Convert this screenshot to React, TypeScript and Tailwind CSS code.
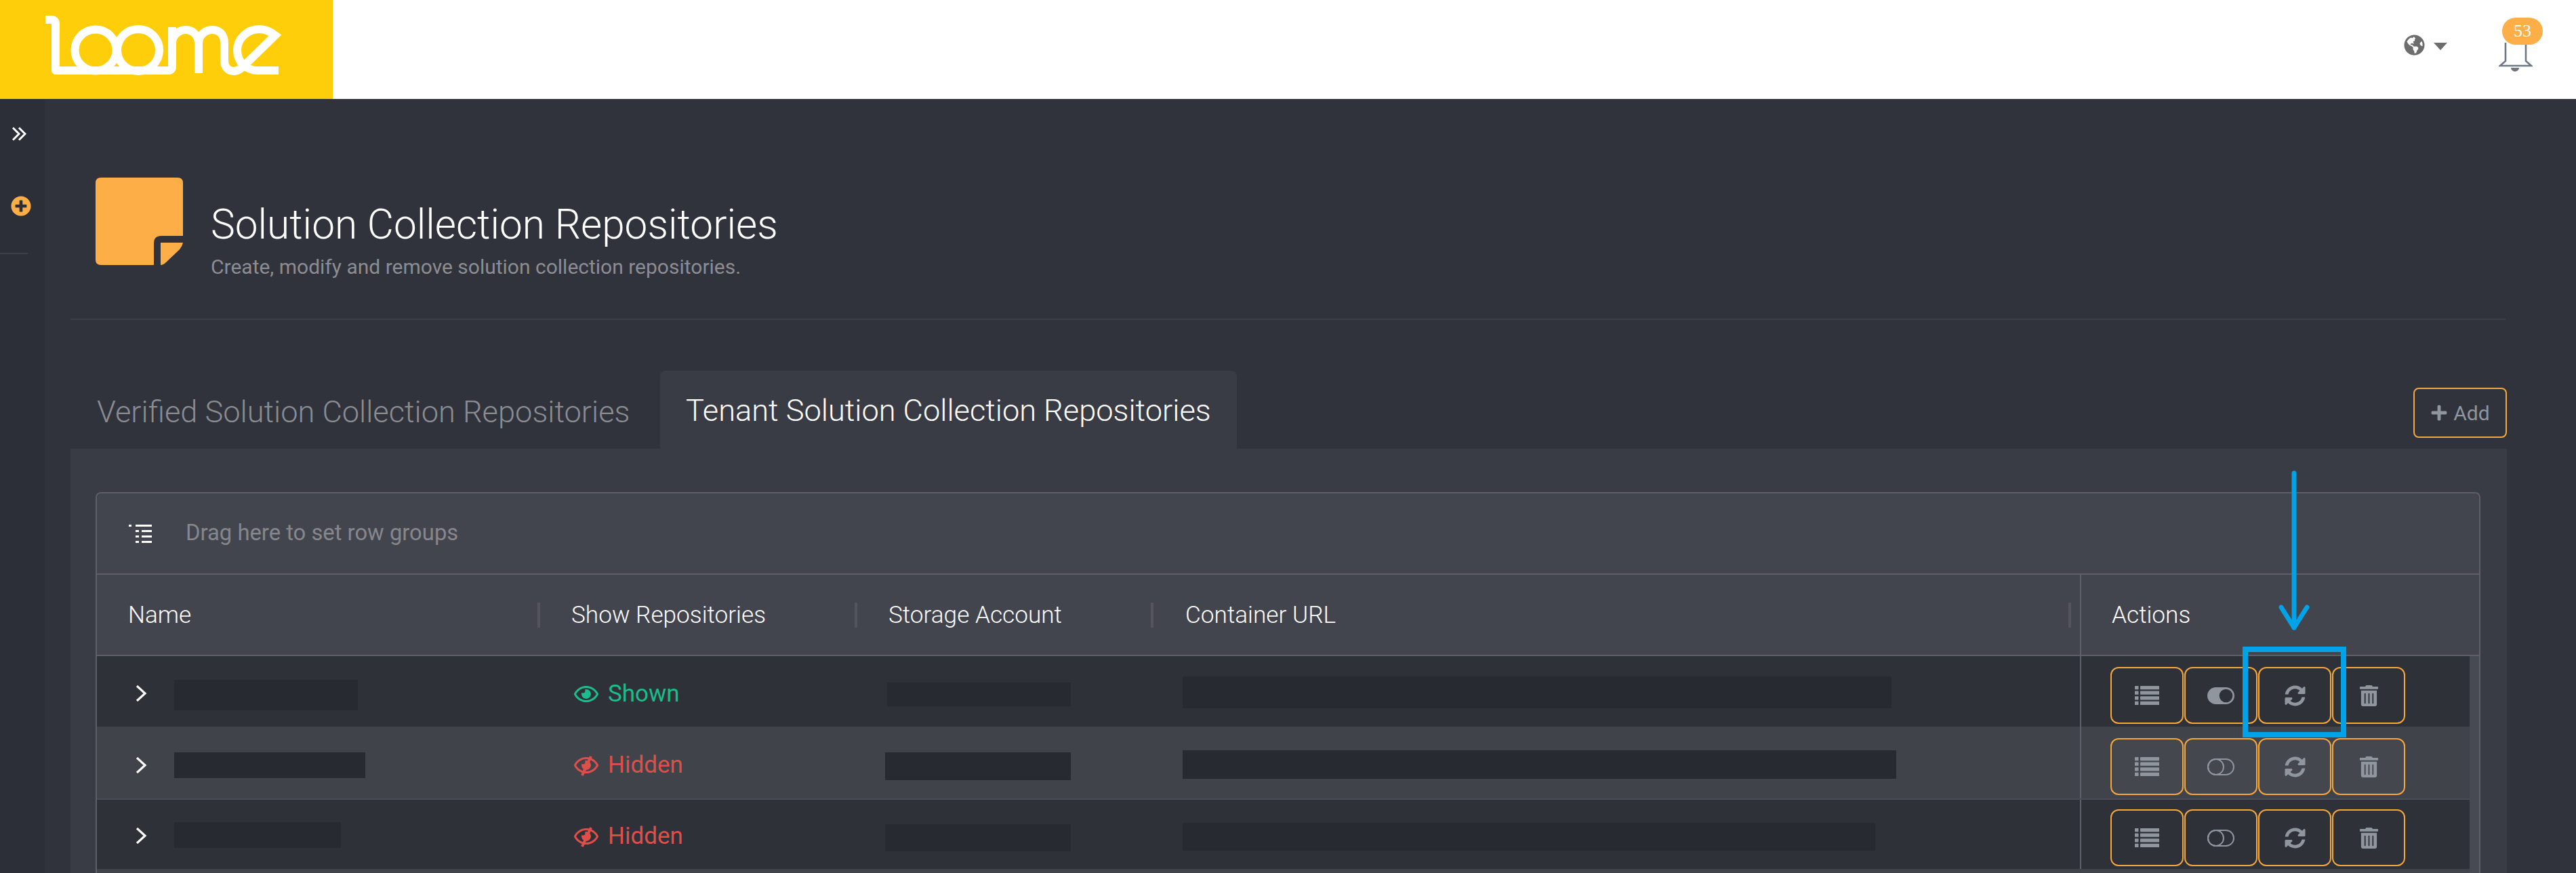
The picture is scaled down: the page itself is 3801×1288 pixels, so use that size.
import React from "react";
import { FaGlobeAmericas, FaPlus, FaPlusCircle, FaRegEye, FaSyncAlt, FaTrashAlt } from "react-icons/fa";

function Logo() {
  return (
    <svg width="491" height="146" viewBox="0 0 491 146" fill="none" stroke="#fff" strokeWidth="12">
      <path d="M67 29H76Q82 29 82 36V104H248Q254 104 254 98V40" strokeLinejoin="round" />
      <circle cx="141" cy="74" r="30.5" />
      <circle cx="204" cy="74" r="31" />
      <path d="M254 64C254 50 266 44 274 44C284 44 293 52 293 64V108" />
      <path d="M293 64C293 50 305 44 313 44C325 44 331 52 331 64V90C331 99 337 105 345 105C352 105 357 100 361 96L406 52C398 46 390 43 383 43C364 43 350 58 350 74C350 92 364 104 380 104H411" />
    </svg>
  );
}

function NoteIcon() {
  return (
    <svg width="129" height="129" viewBox="0 0 129 129">
      <path d="M8 0H121Q129 0 129 8V86H97Q86 86 86 97V129H8Q0 129 0 121V8Q0 0 8 0Z" fill="#fdae47" />
      <path d="M96 96H129Q128 101 124 106L104 125Q100 129 96 129Z" fill="#fdae47" />
    </svg>
  );
}

function Bell() {
  return (
    <svg width="50" height="46" viewBox="0 0 50 46" fill="none">
      <path d="M10 3V30L2 37H48L40 30V3" stroke="#6f7882" strokeWidth="2.6" />
      <path d="M18 40H30C30 43 27 45.500 24 45.500C21 45.500 18 43 18 40Z" fill="#6f7882" />
    </svg>
  );
}

function GroupIcon() {
  return (
    <svg width="34" height="27" viewBox="0 0 34 27" fill="#fff">
      <rect x="0" y="0" width="4" height="3" />
      <rect x="10" y="0" width="24" height="3" />
      <rect x="10" y="8" width="5" height="3" />
      <rect x="19" y="8" width="15" height="3" />
      <rect x="10" y="16" width="5" height="3" />
      <rect x="19" y="16" width="15" height="3" />
      <rect x="10" y="24" width="5" height="3" />
      <rect x="19" y="24" width="15" height="3" />
    </svg>
  );
}

function ListIcon() {
  return (
    <svg width="36" height="28" viewBox="0 0 36 28" fill="#8f969e">
      {[0, 7.6, 15.2, 22.8].map((y) => (
        <g key={y}>
          <rect x="0" y={y} width="5.500" height="5.200" rx="0.600" />
          <rect x="8" y={y} width="28" height="5.200" rx="0.600" />
        </g>
      ))}
    </svg>
  );
}

function Toggle({ on }: { on: boolean }) {
  return on ? (
    <svg width="40" height="25" viewBox="0 0 40 25">
      <rect x="1" y="1" width="38" height="23" rx="11.500" fill="#8f969e" stroke="#8f969e" strokeWidth="2" />
      <circle cx="27.500" cy="12.500" r="9.800" fill="#2f3139" />
    </svg>
  ) : (
    <svg width="40" height="25" viewBox="0 0 40 25" fill="none" stroke="#8f969e" strokeWidth="2">
      <rect x="1" y="1" width="38" height="23" rx="11.500" />
      <circle cx="12.500" cy="12.500" r="11.500" />
    </svg>
  );
}

function HiddenEye() {
  return (
    <span className="relative block w-[36px] h-[36px]">
      <FaRegEye size={36} />
      <svg className="absolute left-0 top-0" width="36" height="36" viewBox="0 0 36 36" fill="none" stroke="currentColor" strokeWidth="4">
        <path d="M25 5L12 33" />
      </svg>
    </span>
  );
}

function ActionButton({ children, className }: { children: React.ReactNode; className: string }) {
  return (
    <button className={`w-[108px] h-[84px] flex items-center justify-center border-[2.500px] border-[#f5a73b] rounded-[12px] ${className}`}>
      {children}
    </button>
  );
}

const rows = [
  {
    rowClass: "h-[104px] bg-[#2f3139]", btnClass: "bg-[#2f3139]", btnTop: "pt-[16px]", statusTop: "pt-[36px]", chevTop: "mt-[43px]", shown: true, on: true,
    name: "mt-[35px] w-[271px] h-[45px]", storage: "mt-[39px] ml-[44px] w-[271px] h-[35px]", url: "mt-[30px] w-[1046px] h-[47px]",
  },
  {
    rowClass: "h-[108px] bg-[#41434b] border-b-2 border-[#4a4c55]", btnClass: "bg-[#45474f]", btnTop: "pt-[17px]", statusTop: "pt-[37px]", chevTop: "mt-[45px]", shown: false, on: false,
    name: "mt-[38px] w-[282px] h-[38px]", storage: "mt-[38px] ml-[41px] w-[274px] h-[41px]", url: "mt-[35px] w-[1053px] h-[42px]",
  },
  {
    rowClass: "h-[102px] bg-[#2f3139]", btnClass: "bg-[#2f3139]", btnTop: "pt-[14px]", statusTop: "pt-[34px]", chevTop: "mt-[41px]", shown: false, on: false,
    name: "mt-[33px] w-[246px] h-[38px]", storage: "mt-[36px] ml-[41px] w-[274px] h-[40px]", url: "mt-[34px] w-[1022px] h-[41px]",
  },
];

function Sep({ className = "" }: { className?: string }) {
  return <span className={`ml-auto w-[4px] h-[37px] bg-[#53545c] ${className}`} />;
}

export default function App() {
  return (
    <div className="relative w-[3801px] h-[1288px] overflow-hidden flex flex-col bg-[#30333b] font-['Roboto',sans-serif]">
      <header className="h-[146px] shrink-0 bg-white flex">
        <div className="w-[491px] bg-[#ffce0a]">
          <Logo />
        </div>
        <div className="ml-auto flex items-start pr-[49px]">
          <FaGlobeAmericas className="mt-[51px] text-[#6d6d6d]" size={31} />
          <span className="mt-[63px] ml-[13px] w-0 h-0 border-x-[10px] border-x-transparent border-t-[11px] border-t-[#6d6d6d]" />
          <div className="relative ml-[76px] w-[65px] h-[105px] pt-[60px]">
            <Bell />
            <span className="absolute left-[5px] top-[26px] w-[60px] h-[40px] rounded-[20px] bg-[#fdae47] text-white text-[26px] leading-[40px] text-center font-['Liberation_Serif',serif]">
              53
            </span>
          </div>
        </div>
      </header>

      <div className="flex-1 flex min-h-0">
        <aside className="w-[66px] shrink-0 bg-[#2c2f37] flex flex-col">
          <svg className="mt-[41px] ml-[18px]" width="21" height="21" viewBox="0 0 21 21" fill="none" stroke="#fff" strokeWidth="3">
            <path d="M1 1.500L10 10.500L1 19.500" />
            <path d="M10 1.500L19 10.500L10 19.500" />
          </svg>
          <FaPlusCircle className="mt-[81px] ml-[16px] text-[#fdae47]" size={30} />
          <div className="mt-[54px] w-[41px] h-[2px] bg-[#3c3e48]" />
        </aside>

        <main className="flex-1 min-w-0 pl-[38px] pr-[102px] flex flex-col">
          <section className="h-[326px] shrink-0 border-b-2 border-[#3d3f4a] flex items-start pl-[37px] pt-[116px] mr-[2px]">
            <NoteIcon />
            <div className="ml-[41px] pt-[36px]">
              <h1 className="text-[60.300px] leading-[68px] font-light text-white">Solution Collection Repositories</h1>
              <p className="mt-[10px] text-[30px] leading-[36px] font-normal text-[#8b8d93]">
                Create, modify and remove solution collection repositories.
              </p>
            </div>
          </section>

          <div className="mt-[75px] h-[115px] shrink-0 flex items-start">
            <div className="pl-[39px] pt-[35px] w-[870px] text-[45.200px] leading-[52px] font-light text-[#8a8c92]">
              Verified Solution Collection Repositories
            </div>
            <div className="w-[851px] h-[115px] pl-[38px] pt-[33px] rounded-t-[8px] bg-[#393c45] text-[45.200px] leading-[52px] font-light text-white">
              Tenant Solution Collection Repositories
            </div>
            <button className="ml-auto mt-[25px] w-[138px] h-[74px] flex items-center justify-center gap-[8px] border-[2.500px] border-[#f5a73b] rounded-[8px] text-[30px] font-normal text-[#8f969e]">
              <FaPlus size={26} />
              Add
            </button>
          </div>

          <div className="flex-1 min-h-0 bg-[#393c45] pl-[37px] pr-[39px] pt-[64px]">
            <div className="h-full border-x-2 border-t-2 border-[#5e5f68] rounded-tl-[8px] rounded-tr-[8px] flex flex-col">
              <div className="h-[118px] shrink-0 bg-[#43454e] flex items-center pl-[47px] rounded-t-[8px]">
                <GroupIcon />
                <span className="ml-[50px] text-[32.800px] font-normal text-[#85878d]">Drag here to set row groups</span>
              </div>
              <div className="h-[122px] shrink-0 bg-[#43454e] border-y-2 border-[#5e5f68] grid grid-cols-[654px_468px_437px_1367px_1fr] text-[35.200px] font-light text-white">
                <div className="flex items-center pl-[46px]">Name<Sep /></div>
                <div className="flex items-center pl-[46px]">Show Repositories<Sep /></div>
                <div className="flex items-center pl-[46px]">Storage Account<Sep /></div>
                <div className="flex items-center pl-[47px]">Container URL<Sep className="mr-[13px]" /></div>
                <div className="flex items-center pl-[45px] border-l-2 border-[#5e5f68]">Actions</div>
              </div>
              <div className="flex-1 min-h-0 flex bg-[#41434b]">
                <div className="flex-1 min-w-0">
                  {rows.map((r, i) => (
                    <div key={i} className={`grid grid-cols-[654px_468px_437px_1367px_1fr] ${r.rowClass}`}>
                      <div className="flex items-start pl-[56px]">
                        <svg className={`shrink-0 ${r.chevTop}`} width="18" height="24" viewBox="0 0 18 24" fill="none" stroke="#fff" strokeWidth="3.200">
                          <path d="M3 1L15 12L3 23" />
                        </svg>
                        <div className={`ml-[40px] bg-[#282a32] ${r.name}`} />
                      </div>
                      <div className={`flex items-start pl-[50px] ${r.statusTop}`}>
                        <div className={`flex items-center h-[40px] text-[35px] ${r.shown ? "text-[#1bbd8a]" : "text-[#df4f49]"}`}>
                          {r.shown ? <FaRegEye size={36} /> : <HiddenEye />}
                          <span className="ml-[14px]">{r.shown ? "Shown" : "Hidden"}</span>
                        </div>
                      </div>
                      <div className="flex items-start">
                        <div className={`bg-[#282a32] ${r.storage}`} />
                      </div>
                      <div className="flex items-start pl-[43px]">
                        <div className={`bg-[#282a32] ${r.url}`} />
                      </div>
                      <div className={`flex items-start gap-[1px] pl-[43px] border-l-2 border-[#5e5f68] ${r.btnTop}`}>
                        <ActionButton className={r.btnClass}><ListIcon /></ActionButton>
                        <ActionButton className={r.btnClass}><Toggle on={r.on} /></ActionButton>
                        <ActionButton className={r.btnClass}><FaSyncAlt size={31} className="text-[#8f969e]" /></ActionButton>
                        <ActionButton className={r.btnClass}><FaTrashAlt size={31} className="text-[#8f969e]" /></ActionButton>
                      </div>
                    </div>
                  ))}
                </div>
                <div className="w-[14px] shrink-0 bg-[#484a53]" />
              </div>
            </div>
          </div>
        </main>
      </div>

      <div className="absolute left-[3309px] top-[954px] w-[153px] h-[134px] border-8 border-[#00a2e8]" />
      <svg className="absolute left-[3360px] top-[692px]" width="50" height="242" viewBox="0 0 50 242" fill="none" stroke="#00a2e8" strokeWidth="7" strokeLinecap="round" strokeLinejoin="round">
        <path d="M25 6V234" />
        <path d="M6 204L25 234L44 204" />
      </svg>
    </div>
  );
}
